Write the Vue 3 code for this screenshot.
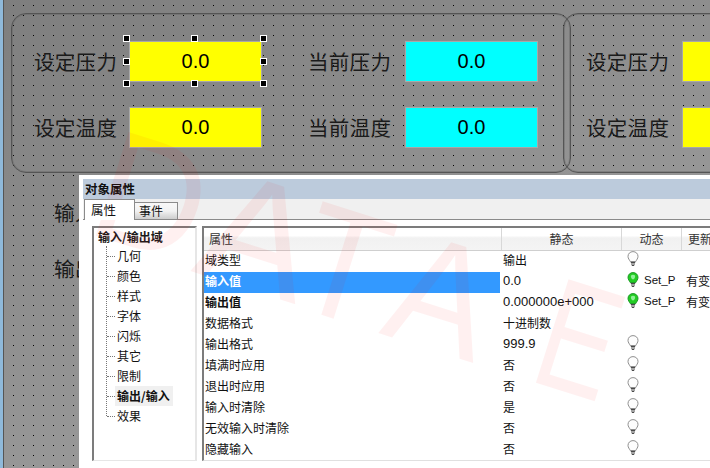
<script setup>
const tree = ['几何', '颜色', '样式', '字体', '闪烁', '其它', '限制', '输出/输入', '效果']
const rows = [
  { n: '域类型', v: '输出', bulb: 'off' },
  { n: '输入值', v: '0.0', bulb: 'on', tag: 'Set_P', upd: '有变化', sel: true },
  { n: '输出值', v: '0.000000e+000', bulb: 'on', tag: 'Set_P', upd: '有变化', bold: true },
  { n: '数据格式', v: '十进制数' },
  { n: '输出格式', v: '999.9', bulb: 'off' },
  { n: '填满时应用', v: '否', bulb: 'off' },
  { n: '退出时应用', v: '否', bulb: 'off' },
  { n: '输入时清除', v: '是', bulb: 'off' },
  { n: '无效输入时清除', v: '否', bulb: 'off' },
  { n: '隐藏输入', v: '否', bulb: 'off' },
]
const isLatin = (s) => /^[\x00-\x7f]+$/.test(s)
const handles = [[-7,-7],[61,-7],[130,-7],[-7,16],[130,16],[-7,38],[61,38],[130,38]]
const marks = [
  { c: 'D', x: 84, y: 232, sx: 0.95 },
  { c: 'A', x: 190, y: 271, sx: 1.05 },
  { c: 'T', x: 287, y: 304, sx: 0.88 },
  { c: 'A', x: 378, y: 333, sx: 0.95 },
  { c: 'E', x: 527, y: 380, sx: 0.72 },
]
</script>

<template>
  <div class="screen">
    <svg class="dots" width="710" height="468">
      <defs>
        <pattern id="grid" x="3" y="5" width="10" height="10" patternUnits="userSpaceOnUse">
          <rect width="1" height="1" fill="#000" shape-rendering="crispEdges" />
        </pattern>
      </defs>
      <rect width="710" height="468" fill="url(#grid)" />
    </svg>
    <div class="edge"></div>
    <div class="panels">
      <section class="panel">
        <div class="col first">
          <div class="field">
            <span class="lbl">设定压力</span>
            <span class="val yellow">0.0
              <i v-for="(h, i) in handles" :key="i" class="handle" :style="{ left: h[0] + 'px', top: h[1] + 'px' }"></i>
            </span>
          </div>
          <div class="field"><span class="lbl">设定温度</span><span class="val yellow">0.0</span></div>
        </div>
        <div class="col second">
          <div class="field"><span class="lbl">当前压力</span><span class="val cyan">0.0</span></div>
          <div class="field"><span class="lbl">当前温度</span><span class="val cyan">0.0</span></div>
        </div>
      </section>
      <section class="panel">
        <div class="col">
          <div class="field"><span class="lbl">设定压力</span><span class="val yellow"></span></div>
          <div class="field"><span class="lbl">设定温度</span><span class="val yellow"></span></div>
        </div>
      </section>
    </div>
    <div class="lower">
      <span class="lbl">输入</span>
      <span class="lbl">输出</span>
    </div>

    <div class="dialog">
      <div class="title">对象属性</div>
      <div class="tabs">
        <span class="tab active">属性</span>
        <span class="tab">事件</span>
      </div>
      <div class="body">
        <div class="tree">
          <div class="root">输入/输出域</div>
          <ul class="branch">
            <li v-for="t in tree" :key="t" class="leaf">
              <span :class="{ current: t === '输出/输入' }">{{ t }}</span>
            </li>
          </ul>
        </div>
        <div class="table">
          <div class="head">
            <span class="c1 h">属性</span>
            <span class="c2 h center">静态</span>
            <span class="c3 h center">动态</span>
            <span class="c4 h">更新</span>
          </div>
          <div v-for="r in rows" :key="r.n" class="row">
            <span class="c1 cell" :class="{ sel: r.sel, bold: r.bold || r.sel }">{{ r.n }}</span>
            <span class="c2 cell" :class="{ latin: isLatin(r.v) }">{{ r.v }}</span>
            <span class="c3 cell dyn">
              <svg v-if="r.bulb" class="bulb" viewBox="0 0 12 16" width="12" height="16">
                <path d="M6 .6C3 .6 1 2.800 1 5.400c0 2.200 1.500 3.400 2.200 5.100h5.600C9.500 8.800 11 7.600 11 5.400 11 2.800 9 .6 6 .6Z"
                  :fill="r.bulb === 'on' ? '#22cc22' : '#fdfdfd'" :stroke="r.bulb === 'on' ? '#1f9a2a' : '#8f8f8f'" stroke-width="1" />
                <path v-if="r.bulb === 'on'" d="M4 3.500C5 2.500 7 2.500 8 3.500 8.500 5 7.500 7 6 7.500 4.500 7 3.500 5 4 3.500Z" fill="#90f098" />
                <path d="M3.800 11.500h4.400M4 13h4M4.800 14.500h2.400" stroke="#4a4a4a" stroke-width="1.100" fill="none" />
              </svg>
              <span v-if="r.tag" class="tag">{{ r.tag }}</span>
            </span>
            <span class="c4 cell">{{ r.upd }}</span>
          </div>
        </div>
      </div>
    </div>

    <svg class="mark" viewBox="0 0 710 468" width="710" height="468">
      <text v-for="(m, i) in marks" :key="i" class="mark-text"
        :transform="`translate(${m.x} ${m.y}) rotate(17.5) scale(${m.sx} 1)`">{{ m.c }}</text>
    </svg>
  </div>
</template>

<style scoped>
.screen {
  position: relative;
  width: 710px;
  height: 468px;
  overflow: hidden;
  background: linear-gradient(157deg, #7e7e7e, #a6a6a6);
  font-family: "Noto Sans CJK SC", "Liberation Sans", sans-serif;
  color: #111;
}
.dots { position: absolute; left: 0; top: 0; }
.edge {
  position: absolute;
  left: 0;
  top: 0;
  bottom: 0;
  width: 3px;
  background: #8fb9da;
  border-right: 1px solid #555;
}
.panels {
  position: relative;
  display: flex;
  padding: 13px 0 0 11px;
}
.panel {
  flex: 0 0 560px;
  height: 160px;
  box-sizing: border-box;
  border: 1px solid #555;
  border-radius: 15px;
  display: flex;
  padding: 27px 0 0 23px;
  box-shadow: inset 0 0 0 1px rgba(90, 90, 90, 0.35);
}
.panel + .panel { flex-basis: 300px; margin-left: -8px; }
.col { display: flex; flex-direction: column; gap: 25px; }
.second { margin-left: 47px; }
.field { display: flex; align-items: center; height: 41px; gap: 11px; }
.first .field { gap: 10px; }
.second .field { gap: 12px; }
.lbl {
  font-size: 20.500px;
  letter-spacing: 0.300px;
  width: 84px;
  margin-left: -1px;
  padding-right: 1px;
  padding-bottom: 2px;
  box-sizing: content-box;
  white-space: nowrap;
  color: #1b1b1b;
}
.val {
  position: relative;
  width: 133px;
  height: 41px;
  box-sizing: border-box;
  border: 1px solid #a8a8a8;
  display: flex;
  align-items: center;
  justify-content: center;
  font-family: "Liberation Sans", sans-serif;
  font-size: 20px;
  color: #000;
}
.yellow { background: #ffff00; }
.cyan { background: #00ffff; }
.handle {
  position: absolute;
  width: 5px;
  height: 5px;
  background: #000;
  border: 1px solid #fff;
}
.lower {
  position: absolute;
  left: 55px;
  top: 198px;
  width: 24px;
  overflow: visible;
  display: flex;
  flex-direction: column;
  gap: 28px;
}
.lower .lbl { line-height: 28px; padding-bottom: 0; }

.dialog {
  position: absolute;
  left: 79px;
  top: 175px;
  width: 660px;
  height: 300px;
  box-sizing: border-box;
  background: #f0f0f0;
  border-top: 4px solid #fff;
  border-left: 4px solid #fff;
  font-size: 12px;
  color: #111;
}
.title {
  height: 20px;
  padding-left: 2px;
  background: #bccbdc;
  font-weight: 700;
  font-size: 12.500px;
  line-height: 20px;
}
.tabs {
  display: flex;
  align-items: flex-end;
  height: 20px;
  margin-left: 1px;
}
.tab {
  box-sizing: border-box;
  width: 43px;
  height: 17px;
  line-height: 16px;
  padding-left: 4px;
  border: 1px solid #8b8b8b;
  border-left: 0;
  border-bottom: 0;
  background: linear-gradient(#f8f8f8, #f2f2f2 50%, #cdcdcd);
}
.tab.active {
  width: 51px;
  height: 21px;
  line-height: 20px;
  padding-left: 6px;
  margin-bottom: -1px;
  background: #fff;
  border: 1px solid #8b8b8b;
  border-bottom: 0;
  position: relative;
  z-index: 1;
  font-size: 12.500px;
}
.body {
  display: flex;
  gap: 5px;
  background: #fff;
  padding: 6px 0 0 9px;
  height: 260px;
  border-top: 1px solid #8a8a8a;
  box-sizing: border-box;
  width: 640px;
}
.tree {
  flex: none;
  box-sizing: border-box;
  width: 105px;
  height: 235px;
  background: #fff;
  border: 2px solid #7c7c7c;
  border-right-color: #e6e6e6;
  border-bottom: 1px solid #e6e6e6;
  padding: 0 0 0 4px;
}
.root { font-weight: 700; line-height: 18px; color: #1a1a1a; white-space: nowrap; }
.branch {
  list-style: none;
  margin: 0 0 0 8px;
  padding: 0;
  border-left: 1px dotted #777;
  height: 170px;
}
.leaf {
  height: 20px;
  line-height: 20px;
  display: flex;
  align-items: center;
  padding-left: 10px;
  position: relative;
  white-space: nowrap;
}
.leaf::before {
  content: "";
  position: absolute;
  left: 0;
  top: 10px;
  width: 8px;
  border-top: 1px dotted #777;
}
.current { background: #f0f0f0; font-weight: 700; padding: 0 3px 0 2px; margin-left: -2px; }
.table {
  flex: none;
  box-sizing: border-box;
  width: 540px;
  height: 235px;
  background: #fff;
  border: 2px solid #7c7c7c;
  border-bottom: 1px solid #e0e0e0;
  border-right: 0;
  overflow: hidden;
}
.head {
  display: flex;
  height: 22px;
  background: linear-gradient(#fff 35%, #f1f1f1 45%, #f4f4f4);
  border-bottom: 1px solid #cfcfcf;
}
.h {
  box-sizing: border-box;
  border-right: 1px solid #d8d8d8;
  color: #333;
  line-height: 21px;
}
.head .c1 { width: 298px; padding-left: 5px; }
.head .c2 { width: 120px; }
.head .c3 { width: 60px; }
.head .c4 { width: 60px; padding-left: 6px; border-right: 0; }
.center { text-align: center; }
.row { display: flex; height: 21px; }
.cell { height: 21px; line-height: 17px; white-space: nowrap; flex: none; box-sizing: border-box; }
.row .c1 { width: 296px; padding-left: 1px; }
.row .c2 { width: 120px; margin-left: 2px; padding-left: 1px; }
.row .c3 { width: 60px; }
.row .c4 { width: 60px; padding-left: 4px; }
.latin { font-family: "Liberation Sans", sans-serif; font-size: 13px; }
.bold { font-weight: 700; }
.sel { background: #3399ff; color: #fff; }
.dyn { display: flex; align-items: flex-start; gap: 5px; padding-left: 5px; }
.bulb { flex: none; }
.tag { font-family: "Liberation Sans", sans-serif; font-size: 11.500px; }
.mark {
  position: absolute;
  left: 0;
  top: 0;
  pointer-events: none;
}
.mark-text {
  font-family: "Liberation Sans", sans-serif;
  font-size: 158px;
  fill: rgba(255, 0, 0, 0.06);
}
</style>
